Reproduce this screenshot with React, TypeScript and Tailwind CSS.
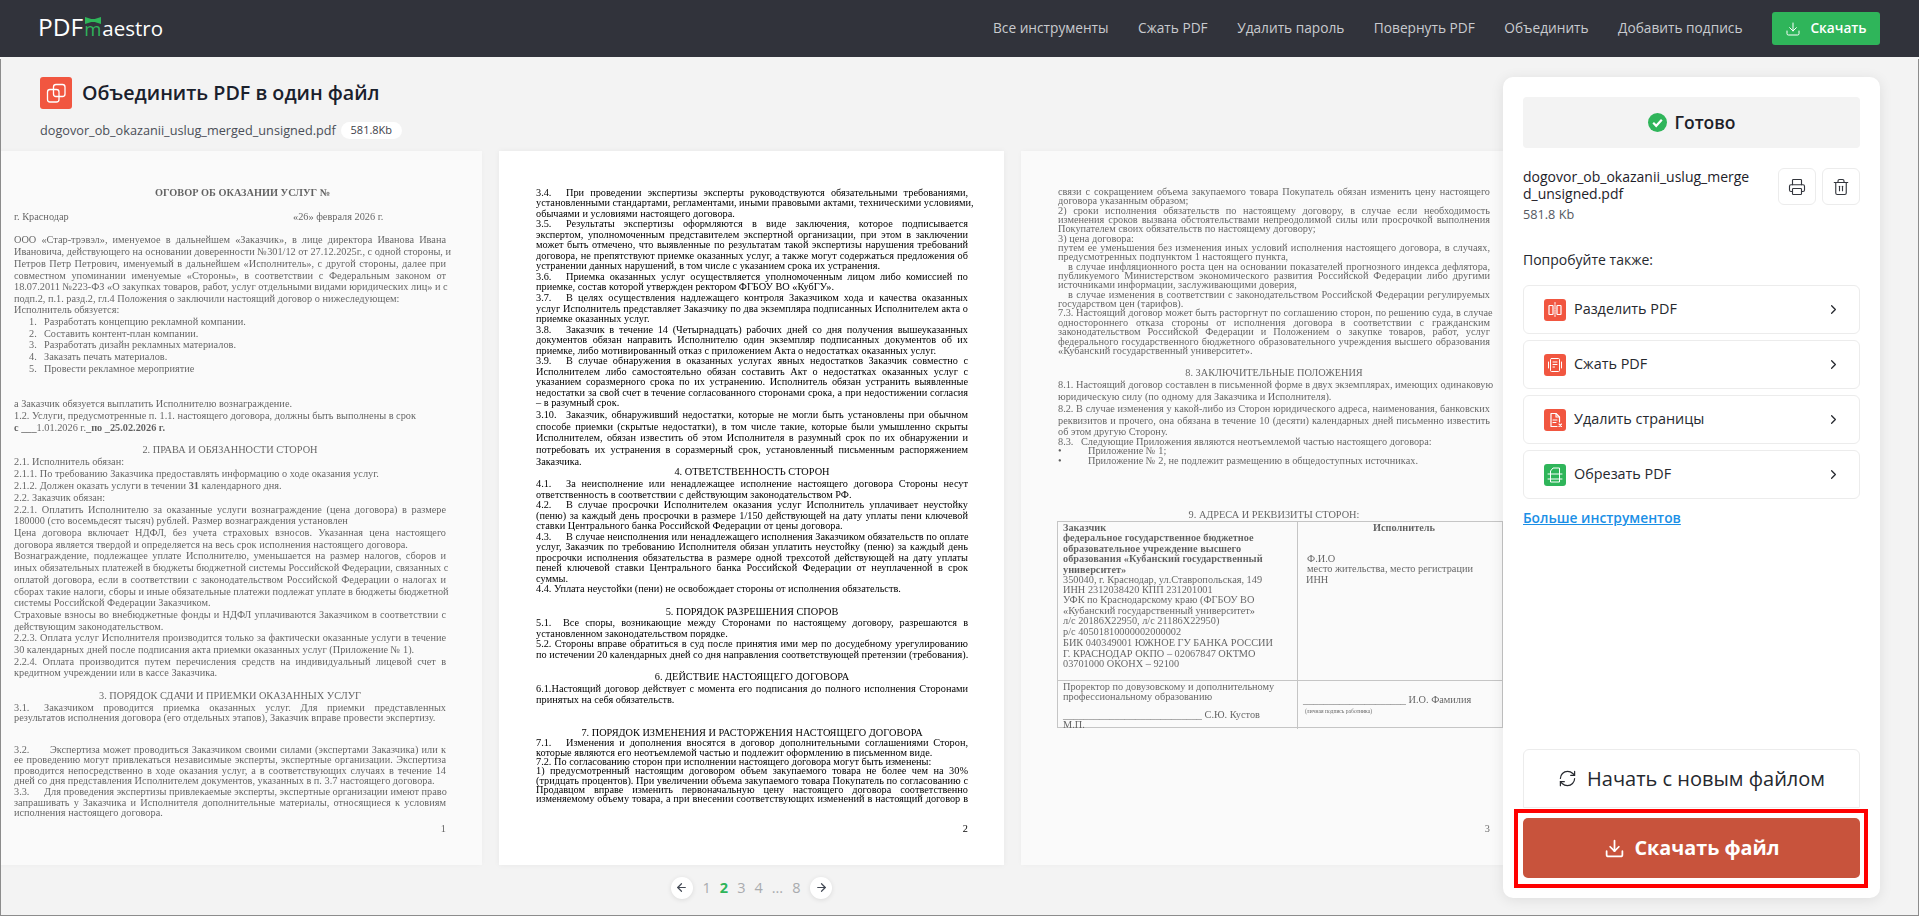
import React from "react";
import { ArrowLeft, ArrowRight, ChevronRight, Download, Printer, RefreshCw, Trash2 } from "lucide-react";

type L = [number, React.ReactNode, string?, number?, number?];

const page1: L[] = [
  [193.3, "ОГОВОР ОБ ОКАЗАНИИ УСЛУГ №", "b", 141],
  [216.7, "г. Краснодар\t«26» февраля 2026 г.", "", 0, 279],
  [239.7, "ООО «Стар-трэвэл», именуемое в дальнейшем «Заказчик», в лице директора Иванова Ивана", "j"],
  [251.7, "Ивановича, действующего на основании доверенности №301/12 от 27.12.2025г., с одной стороны, и", "j"],
  [263.7, "Петров Петр Петрович, именуемый в дальнейшем «Исполнитель», с другой стороны, далее при", "j"],
  [275.7, "совместном упоминании именуемые «Стороны», в соответствии с Федеральным законом от", "j"],
  [286.7, "18.07.2011 №223-ФЗ «О закупках товаров, работ, услуг отдельными видами юридических лиц» и с", "j"],
  [298.7, "подп.2, п.1. разд.2, гл.4 Положения о заключили настоящий договор о нижеследующем:"],
  [310.3, "Исполнитель обязуется:"],
  [321.7, "1.\tРазработать концепцию рекламной компании.", "", 15, 15],
  [333.7, "2.\tСоставить контент-план компании.", "", 15, 15],
  [345.3, "3.\tРазработать дизайн рекламных материалов.", "", 15, 15],
  [356.7, "4.\tЗаказать печать материалов.", "", 15, 15],
  [368.7, "5.\tПровести рекламное мероприятие", "", 15, 15],
  [403.7, "а Заказчик обязуется выплатить Исполнителю вознаграждение."],
  [415.7, "1.2. Услуги, предусмотренные п. 1.1. настоящего договора, должны быть выполнены в срок"],
  [427.7, <><b>с ___</b>1.01.2026 г.<b>_по _25.02.2026 г.</b></>],
  [450.3, "2. ПРАВА И ОБЯЗАННОСТИ СТОРОН", "c"],
  [462.3, "2.1. Исполнитель обязан:"],
  [473.7, "2.1.1. По требованию Заказчика предоставлять информацию о ходе оказания услуг."],
  [485.7, <>2.1.2. Должен оказать услуги в течении <b>31</b> календарного дня.</>],
  [497.7, "2.2. Заказчик обязан:"],
  [509.7, "2.2.1. Оплатить Исполнителю за оказанные услуги вознаграждение (цена договора) в размере", "j"],
  [520.7, "180000 (сто восемьдесят тысяч) рублей. Размер вознаграждения установлен"],
  [532.7, "Цена договора включает НДФЛ, без учета страховых взносов. Указанная цена настоящего", "j"],
  [544.7, "договора является твердой и определяется на весь срок исполнения настоящего договора."],
  [556, "Вознаграждение, подлежащее уплате Исполнителю, уменьшается на размер налогов, сборов и", "j"],
  [567.7, "иных обязательных платежей в бюджеты бюджетной системы Российской Федерации, связанных с", "j"],
  [579.7, "оплатой договора, если в соответствии с законодательством Российской Федерации о налогах и", "j"],
  [591.7, "сборах такие налоги, сборы и иные обязательные платежи подлежат уплате в бюджеты бюджетной", "j"],
  [602.7, "системы Российской Федерации Заказчиком."],
  [614.7, "Страховые взносы во внебюджетные фонды и НДФЛ уплачиваются Заказчиком в соответствии с", "j"],
  [626.7, "действующим законодательством."],
  [637.7, "2.2.3. Оплата услуг Исполнителя производится только за фактически оказанные услуги в течение", "j"],
  [649.7, "30 календарных дней после подписания акта приемки оказанных услуг (Приложение № 1)."],
  [661.7, "2.2.4. Оплата производится путем перечисления средств на индивидуальный лицевой счет в", "j"],
  [672.7, "кредитном учреждении или в кассе Заказчика."],
  [696.3, "3. ПОРЯДОК СДАЧИ И ПРИЕМКИ ОКАЗАННЫХ УСЛУГ", "c"],
  [707.7, "3.1.\tЗаказчиком проводится приемка оказанных услуг. Для приемки представленных", "j", 0, 30],
  [718, "результатов исполнения договора (его отдельных этапов), Заказчик вправе провести экспертизу."],
  [749.7, "3.2.\tЭкспертиза может проводиться Заказчиком своими силами (экспертами Заказчика) или к", "j", 0, 36],
  [759.7, "ее проведению могут привлекаться независимые эксперты, экспертные организации. Экспертиза", "j"],
  [770.7, "проводится непосредственно в ходе оказания услуг, а в соответствующих случаях в течение 14", "j"],
  [780.7, "дней со дня представления Исполнителем документов, указанных в п. 3.7 настоящего договора."],
  [791.7, "3.3.\tДля проведения экспертизы привлекаемые эксперты, экспертные организации имеют право", "j", 0, 30],
  [802.7, "запрашивать у Заказчика и Исполнителя дополнительные материалы, относящиеся к условиям", "j"],
  [812.7, "исполнения настоящего договора."],
  [829.3, "1", "r"],
];

const page2: L[] = [
  [192.7, "3.4.\tПри проведении экспертизы эксперты руководствуются обязательными требованиями,", "j", 0, 30],
  [202.7, "установленными стандартами, регламентами, иными правовыми актами, техническими условиями,", "j"],
  [213.7, "обычаями и условиями настоящего договора."],
  [224, "3.5.\tРезультаты экспертизы оформляются в виде заключения, которое подписывается", "j", 0, 30],
  [234.7, "экспертом, уполномоченным представителем экспертной организации, при этом в заключении", "j"],
  [245, "может быть отмечено, что выявленные по результатам такой экспертизы нарушения требований", "j"],
  [255.7, "договора, не препятствуют приемке оказанных услуг, а также могут содержаться предложения об", "j"],
  [266, "устранении данных нарушений, в том числе с указанием срока их устранения."],
  [276.7, "3.6.\tПриемка оказанных услуг осуществляется уполномоченным лицом либо комиссией по", "j", 0, 30],
  [287, "приемке, состав которой утвержден ректором ФГБОУ ВО «КубГУ»."],
  [298, "3.7.\tВ целях осуществления надлежащего контроля Заказчиком хода и качества оказанных", "j", 0, 30],
  [308.7, "услуг Исполнитель представляет Заказчику по два экземпляра подписанных Исполнителем акта о", "j"],
  [319, "приемке оказанных услуг."],
  [329.7, "3.8.\tЗаказчик в течение 14 (Четырнадцать) рабочих дней со дня получения вышеуказанных", "j", 0, 30],
  [340, "документов обязан направить Исполнителю один экземпляр подписанных документов об их", "j"],
  [350.7, "приемке, либо мотивированный отказ с приложением Акта о недостатках оказанных услуг."],
  [361, "3.9.\tВ случае обнаружения в оказанных услугах явных недостатков Заказчик совместно с", "j", 0, 30],
  [371.7, "Исполнителем либо самостоятельно обязан составить Акт о недостатках оказанных услуг с", "j"],
  [382, "указанием соразмерного срока по их устранению. Исполнитель обязан устранить выявленные", "j"],
  [392.7, "недостатки за свой счет в течение согласованного сторонами срока, а при недостижении согласия", "j"],
  [403, "– в разумный срок."],
  [414.7, "3.10.\tЗаказчик, обнаруживший недостатки, которые не могли быть установлены при обычном", "j", 0, 30],
  [426.7, "способе приемки (скрытые недостатки), в том числе такие, которые были умышленно скрыты", "j"],
  [437.7, "Исполнителем, обязан известить об этом Исполнителя в разумный срок по их обнаружении и", "j"],
  [449.7, "потребовать их устранения в соразмерный срок, установленный письменным распоряжением", "j"],
  [461.7, "Заказчика."],
  [472.3, "4. ОТВЕТСТВЕННОСТЬ СТОРОН", "c"],
  [483.7, "4.1.\tЗа неисполнение или ненадлежащее исполнение настоящего договора Стороны несут", "j", 0, 30],
  [494.7, "ответственность в соответствии с действующим законодательством РФ."],
  [504.7, "4.2.\tВ случае просрочки Исполнителем оказания услуг Исполнитель уплачивает неустойку", "j", 0, 30],
  [515.7, "(пеню) за каждый день просрочки в размере 1/150 действующей на дату уплаты пени ключевой", "j"],
  [525.7, "ставки Центрального банка Российской Федерации от цены договора."],
  [536.7, "4.3.\tВ случае неисполнения или ненадлежащего исполнения Заказчиком обязательств по оплате", "j", 0, 30],
  [546.7, "услуг, Заказчик по требованию Исполнителя обязан уплатить неустойку (пеню) за каждый день", "j"],
  [557.7, "просрочки исполнения обязательства в размере одной трехсотой действующей на дату уплаты", "j"],
  [567.7, "пеней ключевой ставки Центрального банка Российской Федерации от неуплаченной в срок", "j"],
  [578.7, "суммы."],
  [588.7, "4.4. Уплата неустойки (пени) не освобождает стороны от исполнения обязательств."],
  [612.3, "5. ПОРЯДОК РАЗРЕШЕНИЯ СПОРОВ", "c"],
  [622.7, "5.1.\tВсе споры, возникающие между Сторонами по настоящему договору, разрешаются в", "j", 0, 27],
  [633.7, "установленном законодательством порядке."],
  [643.7, "5.2.  Стороны вправе обратиться в суд после принятия ими мер по досудебному урегулированию", "j"],
  [654.7, "по истечении 20 календарных дней со дня направления соответствующей претензии (требования)."],
  [677.3, "6. ДЕЙСТВИЕ НАСТОЯЩЕГО ДОГОВОРА", "c"],
  [688.7, "6.1.Настоящий договор действует с момента его подписания до полного исполнения Сторонами", "j"],
  [699.7, "принятых на себя обязательств."],
  [733.3, "7. ПОРЯДОК ИЗМЕНЕНИЯ И РАСТОРЖЕНИЯ НАСТОЯЩЕГО ДОГОВОРА", "c"],
  [743.7, "7.1.\tИзменения и дополнения вносятся в договор дополнительными соглашениями Сторон,", "j", 0, 30],
  [753.7, "которые являются его неотъемлемой частью и подлежит оформлению в письменном виде."],
  [762.7, "7.2. По согласованию сторон при исполнении настоящего договора могут быть изменены:"],
  [771.7, "1) предусмотренный настоящим договором объем закупаемого товара не более чем на 30%", "j"],
  [781.7, "(тридцать процентов). При увеличении объема закупаемого товара Покупатель по согласованию с", "j"],
  [790.7, "Продавцом вправе изменить первоначальную цену настоящего договора соответственно", "j"],
  [799.7, "изменяемому объему товара, а при внесении соответствующих изменений в настоящий договор в", "j"],
  [829.3, "2", "r"],
];

const page3: L[] = [
  [192, "связи с сокращением объема закупаемого товара Покупатель обязан изменить цену настоящего", "j"],
  [201, "договора указанным образом;"],
  [211, "2) сроки исполнения обязательств по настоящему договору, в случае если необходимость", "j"],
  [220, "изменения сроков вызвана обстоятельствами непреодолимой силы или просрочкой выполнения", "j"],
  [229, "Покупателем своих обязательств по настоящему договору;"],
  [238.7, "3) цена договора:"],
  [248, "путем ее уменьшения без изменения иных условий исполнения настоящего договора, в случаях,", "j"],
  [257, "предусмотренных подпунктом 1 настоящего пункта,"],
  [267, "в случае инфляционного роста цен на основании показателей прогнозного индекса дефлятора,", "j", 10],
  [275.7, "публикуемого Министерством экономического развития Российской Федерации либо другими", "j"],
  [285, "источниками информации, заслуживающими доверия,"],
  [294.7, "в случае изменения в соответствии с законодательством Российской Федерации регулируемых", "j", 10],
  [304, "государством цен (тарифов)."],
  [313, "7.3. Настоящий договор может быть расторгнут по соглашению сторон, по решению суда, в случае", "j"],
  [323, "одностороннего отказа стороны от исполнения договора в соответствии с гражданским", "j"],
  [332, "законодательством Российской Федерации и Положением о закупке товаров, работ, услуг", "j"],
  [342, "федерального государственного бюджетного образовательного учреждения высшего образования", "j"],
  [351.3, "«Кубанский государственный университет»."],
  [373.3, "8. ЗАКЛЮЧИТЕЛЬНЫЕ ПОЛОЖЕНИЯ", "c"],
  [384.7, "8.1. Настоящий договор составлен в письменной форме в двух экземплярах, имеющих одинаковую", "j"],
  [397, "юридическую силу (по одному для Заказчика и Исполнителя)."],
  [408.7, "8.2. В случае изменения у какой-либо из Сторон юридического адреса, наименования, банковских", "j"],
  [420.7, "реквизитов и прочего, она обязана в течение 10 (десяти) календарных дней письменно известить", "j"],
  [432, "об этом другую Сторону."],
  [441.7, "8.3.\tСледующие Приложения являются неотъемлемой частью настоящего договора:", "", 0, 23],
  [450.7, "•\tПриложение № 1;", "", 0, 30],
  [460.7, "•\tПриложение № 2, не подлежит размещению в общедоступных источниках.", "", 0, 30],
  [515.3, "9. АДРЕСА И РЕКВИЗИТЫ СТОРОН:", "c"],
];

const cellA: L[] = [
  [526.7, "Заказчик", "b"],
  [537, "федеральное государственное бюджетное", "b"],
  [547.7, "образовательное учреждение высшего", "b"],
  [557.7, "образования «Кубанский государственный", "b"],
  [568.7, "университет»", "b"],
  [578.7, "350040, г. Краснодар, ул.Ставропольская, 149"],
  [589.3, "ИНН 2312038420 КПП 231201001"],
  [599.3, "УФК по Краснодарскому краю (ФГБОУ ВО"],
  [610.3, "«Кубанский государственный университет»"],
  [620.3, "л/с 20186X22950, л/с 21186X22950)"],
  [631.3, "р/с 40501810000002000002"],
  [642.3, "БИК 040349001 ЮЖНОЕ ГУ БАНКА РОССИИ"],
  [652.7, "Г. КРАСНОДАР  ОКПО – 02067847 ОКТМО"],
  [663.3, "03701000  ОКОНХ – 92100"],
];
const cellB: L[] = [
  [526.7, "Исполнитель", "bc"],
  [557.7, "Ф.И.О", "", 1],
  [567.7, "место жительства, место регистрации", "", 1],
  [578.7, "ИНН"],
];
const cellC: L[] = [
  [684.7, "Проректор по довузовскому и дополнительному"],
  [694.7, "профессиональному образованию"],
  [712.7, "___________________________ С.Ю. Кустов"],
  [722.7, "М.П."],
];
const cellD: L[] = [
  [698.7, "____________________ И.О. Фамилия", "", 0],
];

function Lines({ lines, top, end }: { lines: L[]; top: number; end: number }) {
  return (
    <div style={{ paddingTop: lines[0][0] - 6 - top }}>
      {lines.map((l, i) => {
        const [y, t, f = "", x = 0, tab = 0] = l;
        const next = i + 1 < lines.length ? lines[i + 1][0] - 6 : end;
        const parts = typeof t === "string" ? t.split("\t") : [t];
        return (
          <div
            key={i}
            className={
              "whitespace-nowrap leading-[12px] " +
              (f.includes("j") ? "[text-align-last:justify] " : "") +
              (f.includes("c") ? "text-center " : "") +
              (f.includes("r") ? "text-right " : "") +
              (f.includes("b") ? "font-bold" : "")
            }
            style={{ height: next - (y - 6), paddingLeft: x }}
          >
            {parts.length > 1 ? (
              <>
                <span className="inline-block" style={{ width: tab }}>{parts[0]}</span>
                {parts[1]}
              </>
            ) : (
              t
            )}
          </div>
        );
      })}
    </div>
  );
}

const pageCls = "w-[505px] h-[714px] shrink-0 bg-white pl-[37px] pr-[36px] text-[10.3px] text-black shadow-[0_0_6px_rgba(0,0,0,0.05)] blur-[0.3px] [font-family:'Liberation_Serif',serif]";

function IconBox({ color = "bg-[#f15640]", children }: { color?: string; children: React.ReactNode }) {
  return (
    <span className={"flex h-[22px] w-[22px] shrink-0 items-center justify-center rounded-[3px] " + color}>
      <svg width="22" height="22" viewBox="0 0 22 22" fill="none" stroke="#fff" strokeWidth="1" strokeLinecap="round" strokeLinejoin="round">
        {children}
      </svg>
    </span>
  );
}

const tools: [string, string | undefined, React.ReactNode][] = [
  ["Разделить PDF", undefined, <>
    <rect x="5" y="6.5" width="4" height="9" rx="0.5" strokeWidth="1.2" />
    <rect x="13" y="6.5" width="4" height="9" rx="0.5" strokeWidth="1.2" />
    <path d="M11 3.5v15" strokeDasharray="1.5 1" />
  </>],
  ["Сжать PDF", undefined, <>
    <rect x="6.5" y="4.5" width="9" height="13" rx="1" />
    <path d="M9 8h4M9 10.5h4M9 13h1.5M4.5 8v6M17.5 8v6" />
  </>],
  ["Удалить страницы", undefined, <>
    <path d="M7 4.5h5l3.5 3.5v5M7 4.5v13h6" strokeWidth="1.2" />
    <path d="M12 4.5V8h3.5M9 11h4M9 13.5h3M15 15l2.5 2.5M17.5 15L15 17.5" strokeWidth="1.1" />
  </>],
  ["Обрезать PDF", "bg-[#2fb55a]", <>
    <path d="M6.5 10V7l2.5-3h6.5v14h-9v-8" />
    <path d="M4 10h14M4 15h14" />
  </>],
];

const nav = ["Все инструменты", "Сжать PDF", "Удалить пароль", "Повернуть PDF", "Объединить", "Добавить подпись"];

export default function App() {
  return (
    <div className="flex h-screen flex-col overflow-hidden bg-[#f3f3f3] text-[#1d2129] [font-family:'Open_Sans',sans-serif]">
      <header className="flex h-[57px] shrink-0 items-center justify-between bg-[#31333b] pl-[38px] pr-[39px]">
        <div className="relative mb-[2px] flex items-baseline text-white">
          <span className="text-[24.5px] leading-none">PDF</span>
          <span className="ml-[1px] text-[18.5px] leading-none text-[#2fb55a]">m</span>
          <span className="ml-[1px] text-[20.5px] leading-none">aestro</span>
          <svg className="absolute left-[47px] top-[2px]" width="16" height="7" viewBox="0 0 14 6" fill="#2fb55a">
            <path d="M0 0l5.500 1.700h3L14 0v6L8.500 4.300h-3L0 6z" />
          </svg>
        </div>
        <nav className="flex items-center gap-[29.5px] text-[13.7px] text-[#c9cbcf]">
          {nav.map((n) => <span key={n}>{n}</span>)}
          <button className="flex h-[33px] w-[108px] items-center justify-center gap-[9px] rounded-[3px] bg-[#2fb55a] font-semibold text-white">
            <Download size={16} strokeWidth={1.5} />
            Скачать
          </button>
        </nav>
      </header>

      <main className="relative flex min-h-0 flex-1">
        <div className="pointer-events-none absolute inset-0 top-[2px] z-20 border-x border-b border-[#8c8c8c]" />
        <div className="flex w-[1503px] shrink-0 flex-col">
          <div className="h-[94px] shrink-0 pl-[40px] pt-[20px]">
            <div className="flex items-center gap-[10px]">
              <span className="flex h-[32px] w-[32px] items-center justify-center rounded-[3px] bg-[#f15640]">
                <svg width="32" height="32" viewBox="0 0 32 32" fill="none" stroke="#fff" strokeWidth="1.3">
                  <rect x="13.5" y="7.5" width="11.500" height="12" rx="2.5" />
                  <rect x="7.5" y="12.5" width="11.500" height="12.500" rx="2.5" />
                </svg>
              </span>
              <h1 className="text-[19.7px] font-semibold leading-[32px] text-[#1a202c]">Объединить PDF в один файл</h1>
            </div>
            <div className="mt-[11px] flex items-center gap-[5px]">
              <span className="text-[12.7px] leading-[20px] text-[#4a4e57]">dogovor_ob_okazanii_uslug_merged_unsigned.pdf</span>
              <span className="flex h-[17px] w-[61px] items-center justify-center rounded-full bg-white text-[11px] text-[#3d4149]">581.8Kb</span>
            </div>
          </div>
          <div className="flex h-[714px] shrink-0 justify-center gap-[17px]">
            <div className={pageCls + " opacity-60"}><Lines lines={page1} top={151} end={836} /></div>
            <div className={pageCls}><Lines lines={page2} top={151} end={836} /></div>
            <div className={pageCls + " opacity-60"}>
              <Lines lines={page3} top={151} end={521} />
              <div className="ml-[-1px] grid h-[207px] w-[446px] grid-cols-[240px_1fr] grid-rows-[159px_48px] border border-[#a8a8a8] pl-0">
                <div className="border-b border-r border-[#a8a8a8] pl-[5px]"><Lines lines={cellA} top={522} end={680} /></div>
                <div className="border-b border-[#a8a8a8] pl-[8px]"><Lines lines={cellB} top={522} end={680} /></div>
                <div className="border-r border-[#a8a8a8] pl-[5px]"><Lines lines={cellC} top={680} end={728} /></div>
                <div className="pl-[5px]">
                  <Lines lines={cellD} top={680} end={705} />
                  <div className="whitespace-nowrap pl-[2px] text-[5.6px] leading-[10px]">(личная подпись работника)</div>
                </div>
              </div>
              <Lines lines={[[829.3, "3", "r"]]} top={728} end={836} />
            </div>
          </div>
          <div className="flex flex-1 items-center justify-center pb-[6px] text-[14.5px] text-[#a9abae]">
            <span className="flex h-[22px] w-[22px] items-center justify-center rounded-full bg-white shadow-[0_1px_5px_rgba(0,0,0,0.1)]"><ArrowLeft size={13} strokeWidth={2.2} color="#444a55" /></span>
            <span className="ml-[10px]">1</span>
            <span className="ml-[9px] font-bold text-[#2fb55a]">2</span>
            <span className="ml-[9px]">3</span>
            <span className="ml-[9px]">4</span>
            <span className="ml-[9px]">...</span>
            <span className="ml-[9px]">8</span>
            <span className="ml-[10px] flex h-[22px] w-[22px] items-center justify-center rounded-full bg-white shadow-[0_1px_5px_rgba(0,0,0,0.1)]"><ArrowRight size={13} strokeWidth={2.2} color="#444a55" /></span>
          </div>
        </div>

        <aside className="relative z-10 mb-[18px] mt-[20px] flex w-[377px] shrink-0 flex-col rounded-[10px] bg-white p-[20px] shadow-[0_2px_14px_rgba(0,0,0,0.09)]">
          <div className="flex h-[51px] shrink-0 items-center justify-center gap-[8px] rounded-[4px] bg-[#f3f3f3]">
            <svg width="19" height="19" viewBox="0 0 19 19">
              <circle cx="9.5" cy="9.5" r="9.5" fill="#2fb55a" />
              <path d="M5.2 9.8l3 3 5.600-6" fill="none" stroke="#fff" strokeWidth="2.2" />
            </svg>
            <span className="text-[17.5px] font-semibold text-[#1d2129]">Готово</span>
          </div>
          <div className="mt-[20px] flex justify-between">
            <div className="w-[232px]">
              <div className="break-all text-[14px] font-medium leading-[17px] text-[#1d2129]">dogovor_ob_okazanii_uslug_merged_unsigned.pdf</div>
              <div className="mt-[3px] text-[12.7px] leading-[18px] text-[#55585f]">581.8 Kb</div>
            </div>
            <div className="flex gap-[6px]">
              <span className="flex h-[37px] w-[38px] items-center justify-center rounded-[6px] border border-[#ececec]"><Printer size={18} strokeWidth={1.5} color="#33363d" /></span>
              <span className="flex h-[37px] w-[38px] items-center justify-center rounded-[6px] border border-[#ececec]"><Trash2 size={18} strokeWidth={1.5} color="#33363d" /></span>
            </div>
          </div>
          <div className="mt-[27px] text-[14px] font-medium leading-[20px] text-[#25282e]">Попробуйте также:</div>
          <div className="mt-[15px] flex flex-col gap-[6px]">
            {tools.map(([name, color, icon]) => (
              <div key={name} className="flex h-[49px] items-center rounded-[6px] border border-[#ececec] pl-[20px] pr-[18px]">
                <IconBox color={color}>{icon}</IconBox>
                <span className="ml-[8px] mb-[2px] flex-1 text-[14.4px] font-medium text-[#25282e]">{name}</span>
                <ChevronRight size={15} strokeWidth={2} color="#25282e" />
              </div>
            ))}
          </div>
          <a className="mt-[9px] text-[13.8px] font-semibold leading-[20px] text-[#1b8fe6] underline">Больше инструментов</a>
          <div className="mt-auto flex h-[59px] shrink-0 items-center justify-center gap-[10px] rounded-t-[6px] border border-[#ececec] text-[20px] text-[#25282e]">
            <RefreshCw size={19} strokeWidth={1.5} />
            Начать с новым файлом
          </div>
          <div className="relative mt-[10px] shrink-0">
            <button className="flex h-[60px] w-full items-center justify-center gap-[10px] rounded-[5px] bg-[#c8533c] text-[19.8px] font-bold text-white">
              <Download size={21} strokeWidth={2} />
              Скачать файл
            </button>
            <span className="pointer-events-none absolute bottom-[-10px] left-[-9px] right-[-8px] top-[-9px] border-4 border-[#f00]" />
          </div>
        </aside>
      </main>
    </div>
  );
}
